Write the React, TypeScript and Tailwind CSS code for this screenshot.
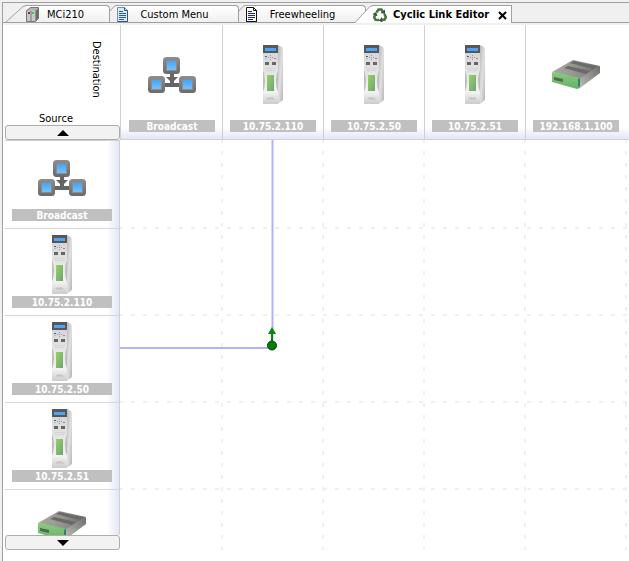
import type { ReactNode } from "react";

const devices = [
  { name: "Broadcast", kind: "broadcast" },
  { name: "10.75.2.110", kind: "drive" },
  { name: "10.75.2.50", kind: "drive" },
  { name: "10.75.2.51", kind: "drive" },
  { name: "192.168.1.100", kind: "box" },
];

// rows that fit completely between the two scroll buttons
const FULL_ROWS = 4;

const CELL_W = 101;
const CELL_H = 87;

function BroadcastIcon() {
  return (
    <svg width="48" height="36" viewBox="0 0 48 36" aria-hidden="true">
      <defs>
        <linearGradient id="node" x1="0" y1="0" x2="0" y2="1">
          <stop offset="0" stopColor="#8e8e8e" />
          <stop offset="1" stopColor="#6a6a6a" />
        </linearGradient>
        <linearGradient id="blue" x1="0" y1="0" x2="0" y2="1">
          <stop offset="0" stopColor="#45a5f8" />
          <stop offset="1" stopColor="#78c0fc" />
        </linearGradient>
      </defs>
      <path d="M22 16h4v4h4l-4 4v2h6v4H16v-4h6v-2l-4-4h4z" fill="#646464" />
      {[
        [15, 0],
        [0, 19],
        [31, 19],
      ].map(([x, y]) => (
        <g key={x}>
          <rect x={x} y={y} width="17" height="17" rx="3.5" fill="url(#node)" />
          <rect x={x + 3} y={y + 3} width="11" height="11" fill="#8f8a84" />
          <rect x={x + 4} y={y + 4} width="9" height="9" fill="url(#blue)" />
        </g>
      ))}
    </svg>
  );
}

function DriveIcon() {
  return (
    <svg width="20" height="59" viewBox="0 0 20 59" aria-hidden="true">
      <defs>
        <linearGradient id="side" x1="0" y1="0" x2="1" y2="1">
          <stop offset="0" stopColor="#b8b8b8" />
          <stop offset="0.5" stopColor="#e0e0e0" />
          <stop offset="1" stopColor="#b4b4b4" />
        </linearGradient>
        <linearGradient id="face" x1="0" y1="0" x2="0" y2="1">
          <stop offset="0" stopColor="#d0d0d0" />
          <stop offset="0.4" stopColor="#e2e2e2" />
          <stop offset="0.8" stopColor="#f2f2f2" />
          <stop offset="1" stopColor="#cccccc" />
        </linearGradient>
        <linearGradient id="green" x1="0" y1="0" x2="1" y2="1">
          <stop offset="0" stopColor="#9ad064" />
          <stop offset="1" stopColor="#6ea575" />
        </linearGradient>
      </defs>
      <path d="M15 0l4 2 1 2v51l-5 4z" fill="url(#side)" />
      <rect width="15" height="59" fill="url(#face)" />
      <path d="M0 25q2 5 2 11t-2 11zM15 25q-2 5-2 11t2 11z" fill="#bdbdbd" />
      <rect width="15" height="8" fill="#55585b" />
      <rect x="2" y="3" width="11" height="3" fill="#4fa3f7" />
      <rect x="2" y="11" width="2" height="1" fill="#3656d8" />
      <rect x="2" y="13" width="2" height="1" fill="#a5cfa5" />
      <rect x="11" y="13" width="2" height="1" fill="#ee6570" />
      <path d="M5 12.5h5M7.500 10v5" stroke="#9a9a9a" strokeDasharray="1 1" />
      <rect x="2" y="17" width="4" height="3" fill="#666" />
      <rect x="9" y="17" width="4" height="3" fill="#666" />
      <path d="M2 23.500h11M3 25.500h9" stroke="#d4d4d4" />
      <rect x="4" y="30" width="7" height="16" fill="url(#green)" />
      <path d="M3 54.500l2-2h5l2 2z" fill="#c4c4c4" />
    </svg>
  );
}

function BoxIcon() {
  return (
    <svg width="48" height="29" viewBox="0 0 48 29" aria-hidden="true">
      <defs>
        <linearGradient id="top" x1="0" y1="0" x2="1" y2="0">
          <stop offset="0" stopColor="#a6aaa2" />
          <stop offset="0.5" stopColor="#94948f" />
          <stop offset="1" stopColor="#6a6a6a" />
        </linearGradient>
        <linearGradient id="side-dark" x1="0" y1="1" x2="1" y2="0">
          <stop offset="0" stopColor="#bcbcb6" />
          <stop offset="1" stopColor="#6c6c6a" />
        </linearGradient>
        <linearGradient id="front" x1="0" y1="0" x2="0" y2="1">
          <stop offset="0" stopColor="#8acb7c" />
          <stop offset="1" stopColor="#66b068" />
        </linearGradient>
      </defs>
      <path d="M0 12L21 0l27 6-20 13z" fill="url(#top)" />
      <path d="M28 18L48 6v7L28 28z" fill="url(#side-dark)" />
      <path d="M18 3l4-2 24 6-5 2zM12 8l4-2 22 5-4 3z" fill="#6a6a68" />
      <path d="M0 12l28 6v10l-3 1-25-7z" fill="url(#front)" />
      <path d="M2 17l9 2v3l-9-2z" fill="#4d6b4d" />
      <path d="M26 19l2-1v8l-2 1z" fill="#2d8570" />
    </svg>
  );
}

function DeviceIcon({ kind }: { kind: string }) {
  if (kind === "broadcast") return <BroadcastIcon />;
  if (kind === "drive") return <DriveIcon />;
  return <BoxIcon />;
}

function ServerIcon() {
  return (
    <svg width="14" height="15" viewBox="0 0 14 15" aria-hidden="true">
      <path d="M0.500 3.500L4.500 0.500h8v11l-3 3h-9z" fill="#b4b4b4" stroke="#777" />
      <path d="M1 4h8v10H1z" fill="#c8c8c8" />
      <path d="M9.500 4v10l3-3V1z" fill="#6a6a6a" />
      <path d="M5 4v10" stroke="#777" />
      <rect x="2" y="5" width="2" height="2" fill="#b22222" />
      <rect x="6" y="5" width="2" height="2" fill="#2fd22f" />
    </svg>
  );
}

function PageIcon({ dark }: { dark?: boolean }) {
  return (
    <svg width="13" height="15" viewBox="0 0 13 15" aria-hidden="true">
      <path
        d="M1.500 0.500h7l3 3v11h-10z"
        fill={dark ? "#fff" : "#dce9fb"}
        stroke={dark ? "#111" : "#6f8fc0"}
      />
      <path d="M8.500 0.500v3h3M11.500 3.500v11h-10" fill="none" stroke={dark ? "#111" : "#35547f"} />
      <path
        d="M3 4.500h4M3 6.500h7M3 8.500h7M3 10.500h7M3 12.500h5"
        stroke={dark ? "#1818e0" : "#2458c8"}
      />
    </svg>
  );
}

function RecycleIcon() {
  return (
    <svg width="14" height="14" viewBox="0 0 14 14" fill="none" aria-hidden="true">
      {[0, 120, 240].map((angle) => (
        <g key={angle} transform={`rotate(${angle} 7 7.5)`}>
          <path d="M3.500 4.500L5.500 1.500H8.500L10 4" stroke="#47753f" strokeWidth="2.500" />
          <path d="M7.500 5l4.500 1V1.500z" fill="#2f5e2a" />
        </g>
      ))}
    </svg>
  );
}

type TabProps = {
  label: string;
  icon: ReactNode;
  className: string;
  first?: boolean;
};

function Tab({ label, icon, className, first }: TabProps) {
  return (
    <button type="button" role="tab" aria-selected="false" className={`flex h-[17px] ${className}`}>
      <svg
        width={first ? 20 : 6}
        height="17"
        viewBox={first ? "0 0 20 17" : "0 0 6 17"}
        className="shrink-0"
        aria-hidden="true"
      >
        <path
          d={first ? "M0 17L17 1.500 20 0.500" : "M0 6L4 1.500 6 0.500"}
          fill="none"
          stroke="#a0a0a0"
        />
      </svg>
      <span className="flex h-full grow items-center rounded-tr-sm border-t border-r border-[#a0a0a0] bg-linear-to-b from-white to-[#f0f0f0] pt-px">
        {icon}
        <span className="grow pt-px pr-[18px] text-center">{label}</span>
      </span>
    </button>
  );
}

function TabBar() {
  return (
    <div
      role="tablist"
      className="flex h-5 items-end border-b border-[#a0a0a0] bg-[#f0f0f0] pl-[3px] text-[11px] leading-4 whitespace-nowrap"
    >
      <Tab label="MCi210" icon={<ServerIcon />} className="w-[104px]" first />
      <Tab label="Custom Menu" icon={<PageIcon />} className="w-[129px]" />
      <Tab label="Freewheeling" icon={<PageIcon dark />} className="w-[127px]" />
      <div className="relative -mb-px -ml-[11px] flex h-[18px] w-[157px]">
        <svg width="18" height="18" viewBox="0 0 18 18" className="shrink-0" aria-hidden="true">
          <path d="M0 18L15 1.500 18 0.500V18z" fill="#fff" />
          <path d="M0 17.500L15 1.500 18 0.500" fill="none" stroke="#a0a0a0" />
        </svg>
        <div className="flex grow items-center border-t border-r border-[#a0a0a0] bg-white pt-px pr-1">
          <button type="button" role="tab" aria-selected="true" className="flex grow items-center gap-1.5 font-bold">
            <RecycleIcon />
            Cyclic Link Editor
          </button>
          <button type="button" aria-label="Close">
            <svg width="9" height="9" viewBox="0 0 9 9" aria-hidden="true">
              <path d="M1 1l7 7M8 1L1 8" stroke="#000" strokeWidth="2" />
            </svg>
          </button>
        </div>
      </div>
    </div>
  );
}

function DeviceLabel({ children }: { children: string }) {
  return (
    <div className="h-3 w-full bg-[#c0c0c0] pt-px text-center text-[10px] leading-3 font-bold text-white">
      {children}
    </div>
  );
}

function ScrollButton({ up }: { up?: boolean }) {
  return (
    <button
      type="button"
      aria-label={up ? "Scroll up" : "Scroll down"}
      className="flex h-[15px] w-full shrink-0 items-center justify-center rounded-[3px] border border-[#adadad] bg-[#f2f2f2]"
    >
      <svg width="12" height="6" viewBox="0 0 12 6" aria-hidden="true">
        <path d={up ? "M0 6l6-6 6 6z" : "M0 0h12l-6 6z"} fill="#000" />
      </svg>
    </button>
  );
}

function LinkGrid() {
  return (
    <svg className="block h-[410px] w-full" role="img" aria-label="Link from 10.75.2.50 to 10.75.2.110">
      <g stroke="#f0f0f0" strokeWidth="2" strokeDasharray="4 8" strokeDashoffset="1">
        {[1, 2, 3, 4, 5].map((i) => (
          <line key={i} x1={1 + i * CELL_W} x2={1 + i * CELL_W} y1="0" y2="410" />
        ))}
        {[1, 2, 3, 4].map((i) => (
          <line key={i} x1="0" x2="100%" y1={1 + i * CELL_H} y2={1 + i * CELL_H} />
        ))}
      </g>
      <path d="M0 208H152" stroke="#b2b2fb" strokeWidth="2" />
      <path d="M152.500 200V0" stroke="#b2b2fb" strokeWidth="2" />
      <path d="M152 205v-14" stroke="#0a860a" strokeWidth="2" />
      <path d="M152 187l4 7h-8z" fill="#0a860a" />
      <circle cx="152" cy="205.500" r="4.500" fill="#008000" stroke="#183818" />
    </svg>
  );
}

export default function App() {
  return (
    <div className="min-h-screen bg-[#f0f0f0] pt-0.5 pl-0.5 font-['DejaVu_Sans_Condensed','DejaVu_Sans',sans-serif] text-black">
      <div className="min-h-[559px] border-t border-l border-[#a0a0a0] bg-white">
        <TabBar />
        <div className="h-0.5 bg-[#f0f0f0]" />
        <div className="flex">
          {/* Sources */}
          <div className="flex w-[117px] shrink-0 flex-col pl-0.5">
            <div className="flex h-[100px] shrink-0 flex-col justify-between text-[11px] leading-3">
              <span className="mt-4 mr-[18px] self-end [writing-mode:vertical-rl]">Destination</span>
              <span className="pl-[34px]">Source</span>
            </div>
            <ScrollButton up />
            <div className="h-[395px] overflow-hidden border-t border-r border-[#d0d0d0] bg-[linear-gradient(to_left,#e2e6f8,#ffffff_12px)] pt-px">
              {devices.map((d, i) => (
                <div
                  key={d.name}
                  className="flex h-[87px] flex-col items-center border-b border-[#d8d8d8] px-[7px] pt-1"
                >
                  <div className="flex h-[63px] shrink-0 items-center justify-center">
                    <DeviceIcon kind={d.kind} />
                  </div>
                  {i < FULL_ROWS && <DeviceLabel>{d.name}</DeviceLabel>}
                </div>
              ))}
            </div>
            <ScrollButton />
          </div>

          {/* Destinations and link area */}
          <div className="min-w-0 grow overflow-hidden">
            <div className="flex h-[115px] border-b border-l border-[#d0d0d0] bg-[linear-gradient(to_top,#e2e6f8,#ffffff_12px)]">
              {devices.map((d) => (
                <div
                  key={d.name}
                  className="flex w-[101px] shrink-0 flex-col items-center border-l border-[#d0d0d0] px-[7px] first:border-transparent"
                >
                  <div className="flex h-[95px] shrink-0 items-center justify-center pt-1">
                    <DeviceIcon kind={d.kind} />
                  </div>
                  <DeviceLabel>{d.name}</DeviceLabel>
                </div>
              ))}
            </div>
            <LinkGrid />
          </div>
        </div>
      </div>
    </div>
  );
}
